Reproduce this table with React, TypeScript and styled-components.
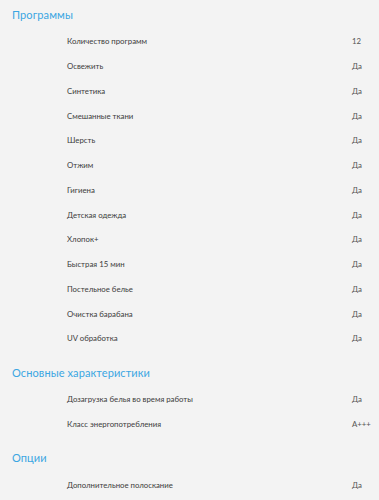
import React from 'react';
import styled, { createGlobalStyle } from 'styled-components';

const GlobalStyle = createGlobalStyle`
  html, body {
    margin: 0;
    padding: 0;
    background: #f3f3f3;
  }
`;

const Page = styled.div`
  width: 379px;
  padding-top: 3px;
  font-family: Lato, 'Noto Sans', sans-serif;
`;

const Section = styled.section`
  & + & {
    margin-top: 10px;
  }
`;

const Heading = styled.h2`
  margin: 0;
  padding-left: 12px;
  height: 26px;
  line-height: 24px;
  font-size: 11px;
  font-weight: 400;
  letter-spacing: 0.1px;
  color: #3aa6e2;
`;

const Row = styled.div`
  display: grid;
  grid-template-columns: 1fr 27px;
  align-items: center;
  height: 24.75px;
  padding-left: 67px;
  font-size: 7.8px;
  color: #3c3c3c;
`;

const Label = styled.span``;

const Value = styled.span`
  color: #555;
`;

type Spec = [string, string];

const sections: { title: string; rows: Spec[] }[] = [
  {
    title: 'Программы',
    rows: [
      ['Количество программ', '12'],
      ['Освежить', 'Да'],
      ['Синтетика', 'Да'],
      ['Смешанные ткани', 'Да'],
      ['Шерсть', 'Да'],
      ['Отжим', 'Да'],
      ['Гигиена', 'Да'],
      ['Детская одежда', 'Да'],
      ['Хлопок+', 'Да'],
      ['Быстрая 15 мин', 'Да'],
      ['Постельное белье', 'Да'],
      ['Очистка барабана', 'Да'],
      ['UV обработка', 'Да'],
    ],
  },
  {
    title: 'Основные характеристики',
    rows: [
      ['Дозагрузка белья во время работы', 'Да'],
      ['Класс энергопотребления', 'A+++'],
    ],
  },
  {
    title: 'Опции',
    rows: [['Дополнительное полоскание', 'Да']],
  },
];

export default function App() {
  return (
    <>
      <GlobalStyle />
      <Page>
        {sections.map((s) => (
          <Section key={s.title}>
            <Heading>{s.title}</Heading>
            {s.rows.map(([label, value]) => (
              <Row key={label}>
                <Label>{label}</Label>
                <Value>{value}</Value>
              </Row>
            ))}
          </Section>
        ))}
      </Page>
    </>
  );
}
